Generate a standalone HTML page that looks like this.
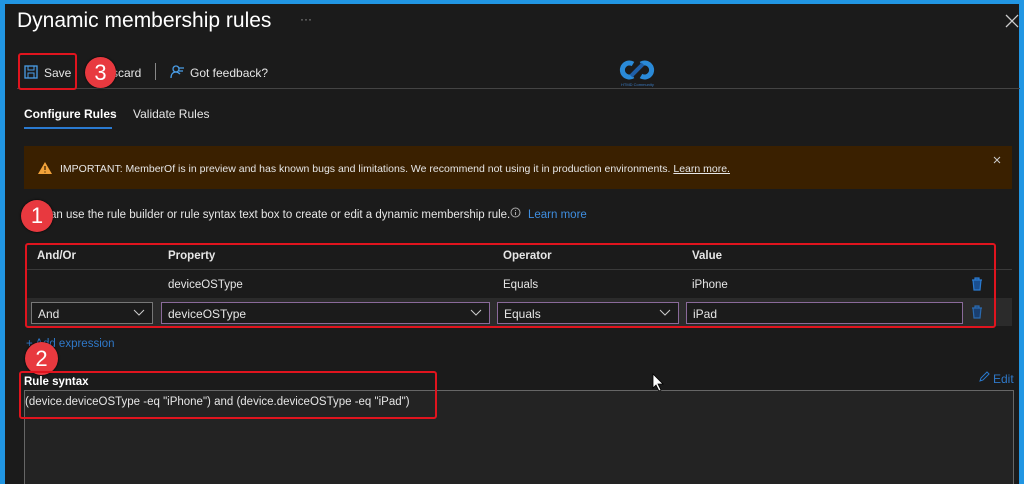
<!DOCTYPE html>
<html><head><meta charset="utf-8"><style>
*{margin:0;padding:0;box-sizing:border-box}
body{width:1024px;height:484px;background:#2196e3;position:relative;overflow:hidden;font-family:"Liberation Sans",sans-serif;color:#e6e6e6}
.p{position:absolute;left:5px;top:4px;width:1014px;height:480px;background:#1b1b1b}
.a{position:absolute;white-space:nowrap}
.sel{position:absolute;height:22px;border:1px solid #8a6a9a;background:#1b1b1b;font-size:12px;padding:4px 6px;color:#e6e6e6}
.sel svg{position:absolute;right:7px;top:6px}
.red{position:absolute;border:2px solid #e0141e;border-radius:3px}
.c{position:absolute;border-radius:50%;background:#e8393f;color:#fff;font-size:22px;text-align:center;box-shadow:0 0 2px #000}
</style></head><body>
<div class="p"></div>
<div class="a" style="left:17px;top:9px;font-size:21px;color:#fff">Dynamic membership rules</div>
<div class="a" style="left:300px;top:12px;font-size:12px;color:#999">···</div>
<svg class="a" style="left:1005px;top:14px" width="14" height="14"><path d="M1 1L13 13M13 1L1 13" stroke="#ccc" stroke-width="1.3"/></svg>
<svg class="a" style="left:24px;top:65px" width="14" height="14"><rect x="1" y="1" width="12" height="12" fill="none" stroke="#4a9ee8" stroke-width="1.3"/><rect x="4" y="1" width="6" height="4" fill="none" stroke="#4a9ee8"/><rect x="4" y="8" width="6" height="5" fill="none" stroke="#4a9ee8"/></svg>
<div class="a" style="left:44px;top:66px;font-size:12px">Save</div>
<div class="a" style="left:112px;top:66px;font-size:12px">scard</div>
<div class="a" style="left:155px;top:63px;width:1px;height:17px;background:#888"></div>
<svg class="a" style="left:169px;top:64px" width="16" height="15"><circle cx="7" cy="5" r="3" fill="none" stroke="#4a9ee8" stroke-width="1.3"/><path d="M2 14c0-4 2-6 5-6 2 0 3 1 4 2M10 4h5M10 7h4" stroke="#4a9ee8" fill="none" stroke-width="1.3"/></svg>
<div class="a" style="left:190px;top:66px;font-size:12px">Got feedback?</div>
<div class="a" style="left:17px;top:88px;width:1003px;height:1px;background:#444"></div>
<svg class="a" style="left:615px;top:56px" width="45" height="32"><path d="M18 8a7 7 0 1 0 0 12M26 8a7 7 0 1 1 0 12" stroke="#2a8ad8" stroke-width="5" fill="none"/><path d="M16 20l12-12" stroke="#1f5fa8" stroke-width="4"/><text x="6" y="30" font-size="4" fill="#3a7ac0" font-family="Liberation Sans">HTMD Community</text></svg>
<div class="red" style="left:18px;top:53px;width:59px;height:37px"></div>
<div class="c" style="left:85px;top:57px;width:31px;height:31px;line-height:31px">3</div>
<div class="a" style="left:24px;top:107px;font-size:12px;font-weight:bold;color:#fff">Configure Rules</div>
<div class="a" style="left:24px;top:127px;width:88px;height:2px;background:#2a7ad0"></div>
<div class="a" style="left:133px;top:107px;font-size:12px">Validate Rules</div>
<div class="a" style="left:24px;top:146px;width:988px;height:43px;background:#3a2000"></div>
<svg class="a" style="left:38px;top:162px" width="14" height="12"><path d="M7 0L14 12H0Z" fill="#f2a23a"/><path d="M7 4v4M7 9.5v1" stroke="#3a2000" stroke-width="1.3"/></svg>
<div class="a" style="left:60px;top:163px;font-size:10.5px">IMPORTANT: MemberOf is in preview and has known bugs and limitations. We recommend not using it in production environments. <span style="text-decoration:underline">Learn more.</span></div>
<svg class="a" style="left:993px;top:156px" width="8" height="8"><path d="M1 1L7 7M7 1L1 7" stroke="#ccc"/></svg>
<div class="a" style="left:50px;top:209px;font-size:11.5px">an use the rule builder or rule syntax text box to create or edit a dynamic membership rule.</div>
<svg class="a" style="left:510px;top:207px" width="11" height="11"><circle cx="5.5" cy="5.5" r="4.5" fill="none" stroke="#aaa"/><path d="M5.5 5v3M5.5 3v1" stroke="#aaa"/></svg>
<div class="a" style="left:528px;top:209px;font-size:11.5px;color:#3f8ee0">Learn more</div>
<div class="a" style="left:37px;top:250px;font-size:11.5px;font-weight:bold">And/Or</div>
<div class="a" style="left:168px;top:250px;font-size:11.5px;font-weight:bold">Property</div>
<div class="a" style="left:503px;top:250px;font-size:11.5px;font-weight:bold">Operator</div>
<div class="a" style="left:692px;top:250px;font-size:11.5px;font-weight:bold">Value</div>
<div class="a" style="left:25px;top:269px;width:987px;height:1px;background:#3a3a3a"></div>
<div class="a" style="left:168px;top:279px;font-size:11.5px">deviceOSType</div>
<div class="a" style="left:503px;top:279px;font-size:11.5px">Equals</div>
<div class="a" style="left:692px;top:279px;font-size:11.5px">iPhone</div>
<div class="a" style="left:25px;top:298px;width:987px;height:28px;background:#2b2b2b"></div>
<div class="sel" style="left:31px;top:302px;width:122px;border-color:#777">And<svg width="12" height="8"><path d="M1 1l5 5 5-5" stroke="#ccc" fill="none"/></svg></div>
<div class="sel" style="left:161px;top:302px;width:329px">deviceOSType<svg width="12" height="8"><path d="M1 1l5 5 5-5" stroke="#ccc" fill="none"/></svg></div>
<div class="sel" style="left:497px;top:302px;width:182px">Equals<svg width="12" height="8"><path d="M1 1l5 5 5-5" stroke="#ccc" fill="none"/></svg></div>
<div class="sel" style="left:686px;top:302px;width:277px">iPad</div>
<svg class="a" style="left:971px;top:277px" width="12" height="14"><path d="M1 3h10M4 3V1h4v2M2 3l1 10h6l1-10" stroke="#2a7ad0" fill="#1a4f90" stroke-width="1.2"/></svg>
<svg class="a" style="left:971px;top:305px" width="12" height="14"><path d="M1 3h10M4 3V1h4v2M2 3l1 10h6l1-10" stroke="#2a6ab0" fill="#1a3f70" stroke-width="1.2"/></svg>
<div class="red" style="left:25px;top:243px;width:971px;height:85px"></div>
<div class="a" style="left:26px;top:338px;font-size:11.5px;color:#2f78c8">+ Add expression</div>
<div class="c" style="left:25px;top:342px;width:33px;height:33px;line-height:33px">2</div>
<div class="c" style="left:21px;top:200px;width:32px;height:32px;line-height:32px">1</div>
<div class="a" style="left:24px;top:376px;font-size:11.5px;font-weight:bold;color:#fff">Rule syntax</div>
<svg class="a" style="left:979px;top:371px" width="11" height="11"><path d="M1 10l1-3 6-6 2 2-6 6z" stroke="#2a7ad0" fill="none"/></svg>
<div class="a" style="left:993px;top:372px;font-size:12px;color:#2f78c8">Edit</div>
<div class="a" style="left:24px;top:390px;width:990px;height:94px;border:1px solid #666;border-bottom:none;background:#232323"></div>
<div class="a" style="left:25px;top:396px;font-size:11.5px">(device.deviceOSType -eq "iPhone") and (device.deviceOSType -eq "iPad")</div>
<div class="red" style="left:19px;top:371px;width:418px;height:48px"></div>
<svg class="a" style="left:652px;top:373px" width="12" height="18"><path d="M1 1v14l3-3 3 6 2-1-3-6h5z" fill="#fff" stroke="#000" stroke-width=".8"/></svg>
</body></html>
